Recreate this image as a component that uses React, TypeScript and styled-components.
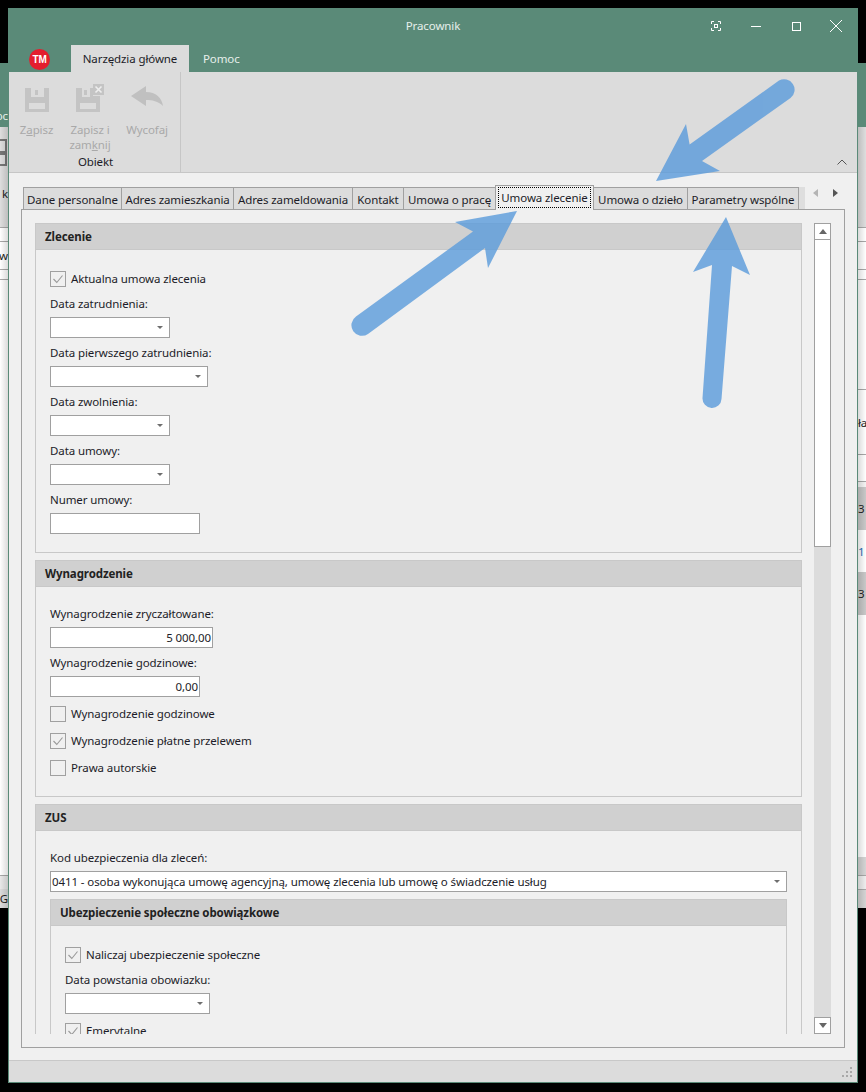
import styled, { createGlobalStyle } from 'styled-components';

const GlobalStyle = createGlobalStyle`
  html, body {
    margin: 0;
    padding: 0;
    background: #000;
  }
  * {
    box-sizing: border-box;
  }
`;

const Screen = styled.div`
  position: relative;
  width: 866px;
  height: 1092px;
  overflow: hidden;
  background: #000;
  font-family: 'Noto Sans', 'Open Sans', sans-serif;
  font-size: 11.5px;
  letter-spacing: -0.1px;
  color: #1c1c28;
`;

/* the application behind the dialog, only a few pixels show on each side */
const BackStrip = styled.div<{ $side: 'left' | 'right' }>`
  position: absolute;
  top: 63px;
  ${({ $side }) => ($side === 'left' ? 'left: 0;' : 'right: 0;')}
  width: 9px;
  height: 845px;
  display: flex;
  flex-direction: column;
  overflow: hidden;
  background: #fff;
  &::after {
    content: '';
    position: absolute;
    top: 64px;
    bottom: 0;
    left: 0;
    right: 0;
    background: linear-gradient(
      ${({ $side }) => ($side === 'left' ? 'to right' : 'to left')},
      rgba(0, 0, 0, 0) 0%,
      rgba(0, 0, 0, 0.16) 100%
    );
  }
`;

const BackBand = styled.div<{ $h: number; $bg: string; $line?: boolean; $side: 'left' | 'right'; $color?: string }>`
  flex: none;
  height: ${({ $h }) => $h}px;
  background: ${({ $bg }) => $bg};
  ${({ $line }) => $line && 'border-top: 1px solid #a8a8a8;'}
  display: flex;
  align-items: center;
  white-space: nowrap;
  overflow: hidden;
  justify-content: ${({ $side }) => ($side === 'left' ? 'flex-end' : 'flex-start')};
  padding: ${({ $side }) => ($side === 'left' ? '0 1px 0 0' : '0 0 0 1px')};
  color: ${({ $color }) => $color || '#222'};
`;

const Dialog = styled.div`
  position: absolute;
  left: 8px;
  top: 8px;
  width: 850px;
  height: 1075px;
  display: flex;
  flex-direction: column;
  background: #f0f0f0;
  border: 1px solid #5a8a78;
  border-top: 0;
`;

const TitleBar = styled.div`
  flex: none;
  height: 36px;
  display: grid;
  grid-template-columns: 1fr auto 1fr;
  align-items: center;
  background: #5a8a78;
  color: #e6efeb;
`;

const TitleText = styled.span`
  padding-bottom: 1px;
`;

const WindowControls = styled.div`
  display: flex;
  justify-content: flex-end;
  padding-right: 1px;
`;

const WindowButton = styled.div`
  width: 40px;
  height: 34px;
  display: flex;
  align-items: center;
  justify-content: center;
`;

const RibbonTabs = styled.div`
  flex: none;
  height: 28px;
  display: flex;
  align-items: flex-end;
  background: #5a8a78;
`;

const Logo = styled.div`
  width: 21px;
  height: 21px;
  margin: 0 21px 2px 20px;
  border-radius: 50%;
  background: #e31e2e;
  color: #fff;
  font-family: 'Liberation Sans', sans-serif;
  font-size: 10px;
  font-weight: 700;
  line-height: 21px;
  text-align: center;
`;

const RibbonTab = styled.div<{ $active?: boolean }>`
  height: 27px;
  line-height: 27px;
  padding: 0 ${({ $active }) => ($active ? '0' : '14px')};
  width: ${({ $active }) => ($active ? '118px' : 'auto')};
  text-align: center;
  background: ${({ $active }) => ($active ? '#dcdcdc' : 'transparent')};
  color: ${({ $active }) => ($active ? '#1c1c28' : '#e6efeb')};
`;

const Ribbon = styled.div`
  flex: none;
  height: 101px;
  display: flex;
  background: #dcdcdc;
  border-bottom: 1px solid #c6c6c6;
`;

const RibbonGroup = styled.div`
  width: 172px;
  display: flex;
  flex-direction: column;
  border-right: 1px solid #c6c6c6;
`;

const RibbonButtons = styled.div`
  height: 80px;
  display: flex;
`;

const RibbonButton = styled.div<{ $w: number }>`
  width: ${({ $w }) => $w}px;
  padding-top: 12px;
  display: flex;
  flex-direction: column;
  align-items: center;
  color: #a9a9a9;
  line-height: 15px;
  text-align: center;
`;

const RibbonIcon = styled.div`
  height: 28px;
  margin-bottom: 10px;
  display: flex;
  align-items: flex-end;
`;

const GroupLabel = styled.div`
  height: 20px;
  line-height: 20px;
  text-align: center;
  padding-left: 2px;
  color: #1c1c28;
`;

const CollapseButton = styled.div`
  margin: auto 10px 7px auto;
  display: flex;
`;

const Content = styled.div`
  flex: 1;
  min-height: 0;
  display: flex;
  flex-direction: column;
  padding: 12px;
`;

const TabStrip = styled.div`
  flex: none;
  height: 25px;
  margin-bottom: -1px;
  padding-left: 2px;
  display: flex;
  align-items: flex-end;
`;

const Tab = styled.div<{ $w: number; $active?: boolean }>`
  position: ${({ $active }) => ($active ? 'relative' : 'static')};
  z-index: ${({ $active }) => ($active ? 1 : 'auto')};
  flex: none;
  width: ${({ $w }) => $w}px;
  height: ${({ $active }) => ($active ? '25px' : '23px')};
  margin-left: -1px;
  padding: ${({ $active }) => ($active ? '1px 2px 1px' : '0')};
  border: 1px solid #a0a0a0;
  border-bottom: 0;
  background: ${({ $active }) => ($active ? '#f0f0f0' : '#dcdcdc')};
  line-height: 24px;
  text-align: center;
  white-space: nowrap;
  overflow: hidden;
  &:first-child {
    margin-left: 0;
  }
`;

const TabFocus = styled.div`
  height: 21px;
  border: 1px dotted #000;
  line-height: 20px;
`;

const TabStub = styled.div`
  flex: none;
  width: 6px;
  height: 22px;
  margin-bottom: 1px;
  background: #dedede;
`;

const TabNav = styled.div`
  margin-left: auto;
  align-self: flex-start;
  margin-top: 4px;
  padding-right: 7px;
  display: flex;
  gap: 15px;
`;

const TabPanel = styled.div`
  flex: 1;
  min-height: 0;
  display: flex;
  padding: 13px 12px 13px 13px;
  border: 1px solid #a0a0a0;
`;

const ScrollArea = styled.div`
  width: 767px;
  height: 100%;
  overflow: hidden;
`;

const Section = styled.section`
  margin-top: 7px;
  &:first-child {
    margin-top: 0;
  }
`;

const SectionHeader = styled.h3`
  margin: 0;
  height: 27px;
  padding-left: 9px;
  background: #d0d0d0;
  border: 1px solid #c8c8c8;
  font-size: 11.5px;
  font-weight: 700;
  line-height: 25px;
  color: #222;
`;

const SectionBody = styled.div`
  padding: 12px 14px 18px;
  border: 1px solid #c8c8c8;
  border-top: 0;
`;

const Field = styled.div`
  margin-top: 5px;
`;

const FieldLabel = styled.div`
  height: 20px;
  margin-bottom: 3px;
  line-height: 20px;
`;

const Input = styled.div<{ $w: number; $right?: boolean }>`
  width: ${({ $w }) => $w}px;
  height: 21px;
  padding: 0 1px;
  display: flex;
  align-items: center;
  justify-content: ${({ $right }) => ($right ? 'flex-end' : 'flex-start')};
  background: #fff;
  border: 1px solid #a0a0a0;
  white-space: nowrap;
`;

const Combo = styled(Input)`
  justify-content: space-between;
  padding-right: 6px;
  &::after {
    content: '';
    margin-left: auto;
    border-style: solid;
    border-width: 3px 3px 0;
    border-color: #6e6e6e transparent transparent;
  }
`;

const CheckRow = styled.label`
  height: 20px;
  margin-top: 7px;
  display: flex;
  align-items: center;
  gap: 5px;
`;

const CheckBox = styled.span`
  width: 16px;
  height: 16px;
  display: flex;
  background: #f0f0f0;
  border: 1px solid #a0a0a0;
`;

const CheckText = styled.span`
  padding-bottom: 2px;
`;

const ScrollBar = styled.div`
  flex: none;
  width: 17px;
  margin-left: 12px;
  display: flex;
  flex-direction: column;
  background: #dcdcdc;
`;

const ScrollButton = styled.div`
  flex: none;
  height: 17px;
  display: flex;
  align-items: center;
  justify-content: center;
  background: #fff;
  border: 1px solid #a0a0a0;
`;

const ScrollThumb = styled.div`
  flex: none;
  height: 307px;
  background: #fff;
  border: 1px solid #a0a0a0;
  border-top: 0;
`;

const ScrollTrack = styled.div`
  flex: 1;
`;

const StatusBar = styled.div`
  flex: none;
  height: 22px;
  display: flex;
  justify-content: flex-end;
  align-items: flex-end;
  padding: 0 5px 5px 0;
  background: #dcdcdc;
  border-top: 1px solid #c8c8c8;
`;

const Arrows = styled.svg`
  position: absolute;
  left: 0;
  top: 0;
  pointer-events: none;
`;

const leftBands = [
  { h: 40, bg: '#5a8a78' },
  { h: 24, bg: '#5a8a78', text: 'oc', color: '#e6efeb' },
  { h: 48, bg: '#dedede', icon: true },
  { h: 36, bg: '#dedede', text: 'k' },
  { h: 16, bg: '#dedede' },
  { h: 14, bg: '#fff', line: true },
  { h: 28, bg: '#fff', line: true, text: 'w' },
  { h: 10, bg: '#fff', line: true },
  { h: 596, bg: '#fff', line: true },
  { h: 14, bg: '#e8e8e8', line: true },
  { h: 19, bg: '#dcdcdc', text: 'IG' },
];

const rightBands = [
  { h: 64, bg: '#5a8a78' },
  { h: 100, bg: '#dedede' },
  { h: 14, bg: '#fff', line: true },
  { h: 28, bg: '#fff', line: true },
  { h: 10, bg: '#fff', line: true },
  { h: 110, bg: '#fff', line: true },
  { h: 65, bg: '#fff', line: true, text: 'ła' },
  { h: 27, bg: '#fff', line: true },
  { h: 6, bg: '#f4f4f4', line: true },
  { h: 43, bg: '#c8c8c8', text: '3' },
  { h: 42, bg: '#fff', text: '1', color: '#2a6fb8' },
  { h: 43, bg: '#c8c8c8', text: '3' },
  { h: 242, bg: '#fff' },
  { h: 18, bg: '#d4d4d4' },
  { h: 14, bg: '#eee', line: true },
  { h: 19, bg: '#d4d4d4', line: true },
];

const tabs = [
  { label: 'Dane personalne', w: 99 },
  { label: 'Adres zamieszkania', w: 113 },
  { label: 'Adres zameldowania', w: 120 },
  { label: 'Kontakt', w: 52 },
  { label: 'Umowa o pracę', w: 93 },
  { label: 'Umowa zlecenie', w: 99, active: true },
  { label: 'Umowa o dzieło', w: 95 },
  { label: 'Parametry wspólne', w: 112 },
];

const SaveIcon = () => (
  <svg width="24" height="24" viewBox="0 0 24 24">
    <path d="M0 0H24V24H0Z" fill="#c4c4c4" />
    <path d="M6 0H19V9H6Z" fill="#dcdcdc" />
    <path d="M10 2H13V7H10Z" fill="#c4c4c4" />
    <path d="M4 15H20V21H4Z" fill="#dcdcdc" />
  </svg>
);

const SaveCloseIcon = () => (
  <svg width="28" height="28" viewBox="0 0 28 28">
    <path d="M0 4H17V12H24V28H0Z" fill="#c4c4c4" />
    <path d="M6 4H14V13H6Z" fill="#dcdcdc" />
    <path d="M8 6H11V11H8Z" fill="#c4c4c4" />
    <path d="M4 19H20V25H4Z" fill="#dcdcdc" />
    <path d="M17 0H28V11H17Z" fill="#c4c4c4" />
    <path d="M19.500 2.500L25.500 8.500M25.500 2.500L19.500 8.500" stroke="#eee" strokeWidth="1.6" />
  </svg>
);

const UndoIcon = () => (
  <svg width="32" height="26" viewBox="0 0 32 26">
    <path d="M0 10L15 0V6C25 6 31 12 32 20C27 15 21 14 15 14V20Z" fill="#c0c0c0" />
  </svg>
);

const Tick = () => (
  <svg width="14" height="14" viewBox="0 0 14 14">
    <path d="M2.500 7L5.800 10.500L11.500 3.500" fill="none" stroke="#999" strokeWidth="1.1" />
  </svg>
);

const Triangle = ({ dir, color }: { dir: 'up' | 'down' | 'left' | 'right'; color: string }) => {
  const points = {
    up: '0,5 4,0 8,5',
    down: '0,0 8,0 4,5',
    left: '5,0 5,8 0,4',
    right: '0,0 5,4 0,8',
  }[dir];
  const wide = dir === 'up' || dir === 'down';
  return (
    <svg width={wide ? 8 : 5} height={wide ? 5 : 8} style={{ display: 'block' }}>
      <polygon points={points} fill={color} />
    </svg>
  );
};

const Check = ({ label, checked }: { label: string; checked?: boolean }) => (
  <CheckRow>
    <CheckBox>{checked && <Tick />}</CheckBox>
    <CheckText>{label}</CheckText>
  </CheckRow>
);

const DateField = ({ label, w }: { label: string; w: number }) => (
  <Field>
    <FieldLabel>{label}</FieldLabel>
    <Combo $w={w} />
  </Field>
);

const App = () => (
  <Screen>
    <GlobalStyle />
    <BackStrip $side="left">
      {leftBands.map((b, i) => (
        <BackBand key={i} $h={b.h} $bg={b.bg} $line={b.line} $color={b.color} $side="left">
          {b.text}
          {b.icon && (
            <svg width="9" height="48" style={{ flex: 'none' }}>
              <path d="M0 13H7V25H0M0 27H7V38H0" fill="none" stroke="#777" strokeWidth="2" />
              <path d="M0 24H7V28H0Z" fill="#777" />
            </svg>
          )}
        </BackBand>
      ))}
    </BackStrip>
    <BackStrip $side="right">
      {rightBands.map((b, i) => (
        <BackBand key={i} $h={b.h} $bg={b.bg} $line={b.line} $color={b.color} $side="right">
          {b.text}
        </BackBand>
      ))}
    </BackStrip>

    <Dialog>
      <TitleBar>
        <span />
        <TitleText>Pracownik</TitleText>
        <WindowControls>
          <WindowButton>
            <svg width="10" height="10" viewBox="0 0 10 10" fill="none" stroke="#fff">
              <path d="M.5 3V.5H3M7 .5H9.500V3M9.500 7V9.500H7M3 9.500H.5V7" />
              <rect x="3.500" y="3.500" width="3" height="3" />
            </svg>
          </WindowButton>
          <WindowButton>
            <svg width="10" height="1">
              <path d="M0 .5H10" stroke="#fff" />
            </svg>
          </WindowButton>
          <WindowButton>
            <svg width="9" height="9">
              <rect x=".5" y=".5" width="8" height="8" fill="none" stroke="#fff" />
            </svg>
          </WindowButton>
          <WindowButton>
            <svg width="12" height="12">
              <path d="M0 0L12 12M12 0L0 12" stroke="#fff" />
            </svg>
          </WindowButton>
        </WindowControls>
      </TitleBar>
      <RibbonTabs>
        <Logo>TM</Logo>
        <RibbonTab $active>Narzędzia główne</RibbonTab>
        <RibbonTab>Pomoc</RibbonTab>
      </RibbonTabs>
      <Ribbon>
        <RibbonGroup>
          <RibbonButtons>
            <RibbonButton $w={55}>
              <RibbonIcon>
                <SaveIcon />
              </RibbonIcon>
              <span>
                Z<u>a</u>pisz
              </span>
            </RibbonButton>
            <RibbonButton $w={52}>
              <RibbonIcon>
                <SaveCloseIcon />
              </RibbonIcon>
              <span>
                Zapisz i
                <br />
                zam<u>k</u>nij
              </span>
            </RibbonButton>
            <RibbonButton $w={62}>
              <RibbonIcon>
                <UndoIcon />
              </RibbonIcon>
              <span>Wycofaj</span>
            </RibbonButton>
          </RibbonButtons>
          <GroupLabel>Obiekt</GroupLabel>
        </RibbonGroup>
        <CollapseButton>
          <svg width="10" height="6">
            <path d="M.5 5.500L5 1L9.500 5.500" fill="none" stroke="#555" />
          </svg>
        </CollapseButton>
      </Ribbon>

      <Content>
        <TabStrip>
          {tabs.map((t) => (
            <Tab key={t.label} $w={t.w} $active={t.active}>
              {t.active ? <TabFocus>{t.label}</TabFocus> : t.label}
            </Tab>
          ))}
          <TabStub />
          <TabNav>
            <Triangle dir="left" color="#b4b4b4" />
            <Triangle dir="right" color="#555" />
          </TabNav>
        </TabStrip>
        <TabPanel>
          <ScrollArea>
            <Section>
              <SectionHeader>Zlecenie</SectionHeader>
              <SectionBody>
                <Check label="Aktualna umowa zlecenia" checked />
                <DateField label="Data zatrudnienia:" w={120} />
                <DateField label="Data pierwszego zatrudnienia:" w={158} />
                <DateField label="Data zwolnienia:" w={120} />
                <DateField label="Data umowy:" w={120} />
                <Field>
                  <FieldLabel>Numer umowy:</FieldLabel>
                  <Input $w={150} />
                </Field>
              </SectionBody>
            </Section>
            <Section>
              <SectionHeader>Wynagrodzenie</SectionHeader>
              <SectionBody>
                <Field>
                  <FieldLabel>Wynagrodzenie zryczałtowane:</FieldLabel>
                  <Input $w={163} $right>
                    5 000,00
                  </Input>
                </Field>
                <Field>
                  <FieldLabel>Wynagrodzenie godzinowe:</FieldLabel>
                  <Input $w={150} $right>
                    0,00
                  </Input>
                </Field>
                <Check label="Wynagrodzenie godzinowe" />
                <Check label="Wynagrodzenie płatne przelewem" checked />
                <Check label="Prawa autorskie" />
              </SectionBody>
            </Section>
            <Section>
              <SectionHeader>ZUS</SectionHeader>
              <SectionBody>
                <Field>
                  <FieldLabel>Kod ubezpieczenia dla zleceń:</FieldLabel>
                  <Combo $w={737}>
                    0411 - osoba wykonująca umowę agencyjną, umowę zlecenia lub umowę o świadczenie usług
                  </Combo>
                </Field>
                <Section>
                  <SectionHeader>Ubezpieczenie społeczne obowiązkowe</SectionHeader>
                  <SectionBody>
                    <Check label="Naliczaj ubezpieczenie społeczne" checked />
                    <DateField label="Data powstania obowiazku:" w={145} />
                    <Check label="Emerytalne" checked />
                  </SectionBody>
                </Section>
              </SectionBody>
            </Section>
          </ScrollArea>
          <ScrollBar>
            <ScrollButton>
              <Triangle dir="up" color="#666" />
            </ScrollButton>
            <ScrollThumb />
            <ScrollTrack />
            <ScrollButton>
              <Triangle dir="down" color="#666" />
            </ScrollButton>
          </ScrollBar>
        </TabPanel>
      </Content>
      <StatusBar>
        <svg width="10" height="10" fill="#a8a8a8">
          <rect x="8" y="0" width="2" height="2" />
          <rect x="4" y="4" width="2" height="2" />
          <rect x="8" y="4" width="2" height="2" />
          <rect x="0" y="8" width="2" height="2" />
          <rect x="4" y="8" width="2" height="2" />
          <rect x="8" y="8" width="2" height="2" />
        </svg>
      </StatusBar>
    </Dialog>

    <Arrows width="866" height="1092">
      <g opacity="0.8" fill="#5a9bdb" stroke="none">
        <path d="M779 80.500L689.600 144.500L686 124L656 181L720 171L702 161L790.500 98A10.500 10.500 0 0 0 779 80.500Z" />
        <path d="M356 316.500L473 231.500L455 222L517 211L488 268L485 248L368 334A10.500 10.500 0 0 1 356 316.500Z" />
        <path d="M702.500 398L712 265L693 272L726 217L750 275L732 266L721.500 399A9.500 9.500 0 0 1 702.500 398Z" />
      </g>
    </Arrows>
  </Screen>
);

export default App;
